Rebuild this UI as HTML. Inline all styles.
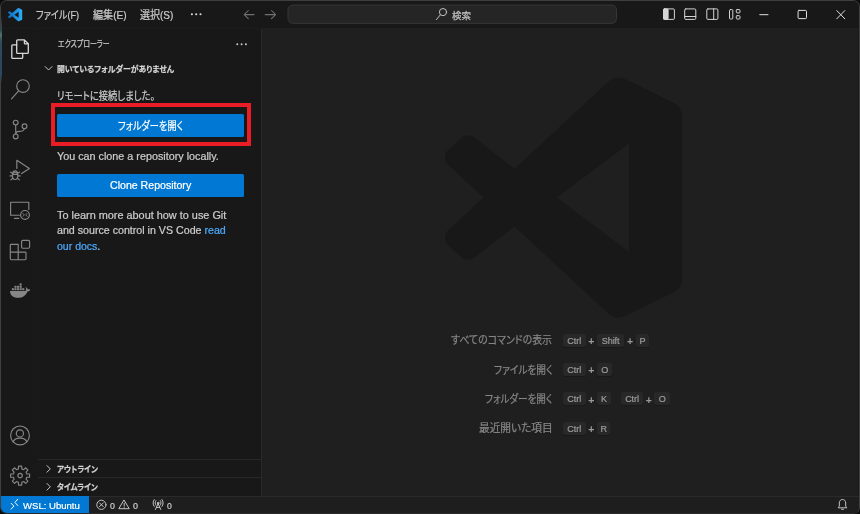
<!DOCTYPE html>
<html lang="ja">
<head>
<meta charset="utf-8">
<title>Visual Studio Code</title>
<style>
*{box-sizing:border-box;margin:0;padding:0}
html,body{width:860px;height:514px;overflow:hidden;background:#0c0c0c}
body{position:relative;font-family:"Liberation Sans","Noto Sans CJK JP",sans-serif;color:#ccc;font-size:10px;line-height:1}
.abs{position:absolute}
.t{position:absolute;white-space:nowrap;font-feature-settings:'palt';-webkit-text-stroke:0.22px;transform-origin:0 50%;line-height:14px;height:14px}
#deskL{left:0;top:16px;width:2px;height:68px;background:linear-gradient(rgba(58,63,70,0) 0,#3a4046 9px,#2e4a4e 14px,#4f7276 19px,#3c5a52 23px,#2d4a5e 26px,#2b4761 58px,rgba(52,60,68,0) 68px)}
#win{left:0;top:0;width:860px;height:514px;background:#181818;border:1px solid #3e3e3e;border-right-color:#404040;border-left-color:#404040;border-bottom-color:#2c2c2c;border-radius:7px;overflow:hidden}
#title{left:0;top:0;width:858px;height:28px;background:#181818;border-bottom:1px solid #1b1b1b}
#act{left:0;top:28px;width:37px;height:467px;background:#181818;border-right:1px solid #1a1a1a}
#side{left:37px;top:28px;width:224px;height:467px;background:#181818;border-right:1px solid #292929}
#editor{left:261px;top:27px;width:596px;height:468px;background:#1f1f1f}
#status{left:0;top:495px;width:858px;height:17px;background:#1e1e1e;border-top:1px solid #2a2a2a}
#remote{left:0;top:495px;width:88px;height:17px;background:#0078d4}
.btn{position:absolute;background:#0078d4;border-radius:1.5px}
.key{position:absolute;height:13px;background:#282828;border-radius:2px;box-shadow:0 1px 0 #191919;text-align:center;line-height:13px;white-space:nowrap;overflow:visible}
.kt{-webkit-text-stroke:0.2px;color:#9c9c9c;font-size:9.1px;letter-spacing:-0.1px}
.plus{position:absolute;width:8px;height:14px;line-height:14px;text-align:center;color:#9a9a9a;font-size:10.5px;font-weight:700}
.hl{position:absolute;height:1px;background:#272727}
svg{position:absolute;overflow:visible}
</style>
</head>
<body>
<div id="win" class="abs">
  <div id="title" class="abs"></div>
  <div id="act" class="abs"></div>
  <div id="side" class="abs"></div>
  <div id="editor" class="abs"></div>
  <div id="status" class="abs"></div>
  <div id="remote" class="abs"></div>
</div>
<div id="deskL" class="abs"></div>
<div id="ov" class="abs" style="left:0;top:0;width:860px;height:514px;will-change:transform">
<!-- search box -->
<svg style="left:0;top:0" width="860" height="30" viewBox="0 0 860 30"><rect x="288" y="5.05" width="328.5" height="18.35" rx="4.6" fill="#252525" stroke="#363636" stroke-width="1"/></svg>
<!-- buttons + red highlight -->
<div class="abs" style="left:50.5px;top:102.6px;width:200.2px;height:43.8px;border:4px solid #ea1c26"></div>
<div class="btn" style="left:57px;top:113.6px;width:187px;height:23.4px"></div>
<div class="btn" style="left:57px;top:174.2px;width:187px;height:22.6px"></div>
<!-- sidebar section separators -->
<div class="hl" style="left:38px;top:459px;width:223px"></div>
<div class="hl" style="left:38px;top:477px;width:223px"></div>
<!-- watermark logo -->
<svg style="left:444.8px;top:76.6px" width="237.2" height="241.2" viewBox="0 0 24 24" preserveAspectRatio="none"><path fill="#181818" d="M23.15 2.587L18.21.21a1.494 1.494 0 0 0-1.705.29l-9.46 8.63-4.12-3.128a.999.999 0 0 0-1.276.057L.327 7.261A1 1 0 0 0 .326 8.74L3.899 12 .326 15.26a1 1 0 0 0 .001 1.479L1.65 17.94a.999.999 0 0 0 1.276.057l4.12-3.128 9.46 8.63a1.492 1.492 0 0 0 1.704.29l4.942-2.377A1.5 1.5 0 0 0 24 20.06V3.939a1.5 1.5 0 0 0-.85-1.352zM18.62 17.4L11.3 12L18.62 6.62z"/></svg>
<!-- title logo -->
<svg style="left:7.6px;top:8px" width="14.2" height="13.4" viewBox="0 0 24 24" preserveAspectRatio="none"><defs><linearGradient id="lg" x1="0" x2="1" y1="0" y2="0"><stop offset="0" stop-color="#0b6fc2"/><stop offset="0.55" stop-color="#1b8fe0"/><stop offset="1" stop-color="#2fb0f7"/></linearGradient></defs><path fill="url(#lg)" d="M23.15 2.587L18.21.21a1.494 1.494 0 0 0-1.705.29l-9.46 8.63-4.12-3.128a.999.999 0 0 0-1.276.057L.327 7.261A1 1 0 0 0 .326 8.74L3.899 12 .326 15.26a1 1 0 0 0 .001 1.479L1.65 17.94a.999.999 0 0 0 1.276.057l4.12-3.128 9.46 8.63a1.492 1.492 0 0 0 1.704.29l4.942-2.377A1.5 1.5 0 0 0 24 20.06V3.939a1.5 1.5 0 0 0-.85-1.352zm-5.146 14.861L10.826 12l7.178-5.448v10.896z"/></svg>
<!-- icon layer -->
<svg style="left:0;top:0" width="860" height="514" viewBox="0 0 860 514" fill="none" stroke-linecap="round" stroke-linejoin="round">
<!-- title: ellipsis, arrows, search glyph, layout + window controls -->
<g fill="#dcdcdc"><circle cx="191.9" cy="14.3" r="1.05"/><circle cx="196.2" cy="14.3" r="1.05"/><circle cx="200.5" cy="14.3" r="1.05"/></g>
<g stroke="#6f6f6f" stroke-width="1.05"><path d="M254 14.6H244.2M248.3 10.5L244.2 14.6L248.3 18.7"/><path d="M265.2 14.6H275.6M271.5 10.5L275.6 14.6L271.5 18.7"/></g>
<g stroke="#c0c0c0" stroke-width="1"><circle cx="443" cy="12.1" r="3.6"/><path d="M440.3 14.9L436.4 19.6"/></g>
<g stroke="#d4d4d4" stroke-width="1">
<rect x="663.5" y="8.9" width="10.9" height="10.5" rx="1.1"/><rect x="663.5" y="8.9" width="4.6" height="10.5" rx="0.8" fill="#d4d4d4"/>
<rect x="684.7" y="8.9" width="11.1" height="10.5" rx="1.1"/><path d="M684.7 16.5H695.8"/>
<rect x="706.8" y="8.9" width="11.1" height="10.5" rx="1.1"/><path d="M713.7 8.9V19.4"/>
<rect x="729.5" y="9.6" width="3.3" height="9.4" rx="0.9"/><rect x="736.3" y="9.6" width="3.7" height="3.3" rx="0.8"/><rect x="736.3" y="15.7" width="3.7" height="3.3" rx="0.8"/>
</g>
<g stroke="#e0e0e0" stroke-width="1"><path d="M759.8 14.7H768"/><rect x="798.1" y="10.4" width="8.4" height="8.2" rx="0.9"/><path d="M836.8 10.6L844.8 18.8M844.8 10.6L836.8 18.8"/></g>
<!-- sidebar: ellipsis + chevrons -->
<g fill="#d0d0d0"><circle cx="237.3" cy="44.2" r="0.95"/><circle cx="241.6" cy="44.2" r="0.95"/><circle cx="245.9" cy="44.2" r="0.95"/></g>
<g stroke="#c8c8c8" stroke-width="1"><path d="M45.2 66.6L48.6 70L52 66.6"/><path d="M47 465.6L50.3 468.9L47 472.2"/><path d="M47 483.5L50.3 486.8L47 490.1"/></g>
<!-- activity bar -->
<g stroke="#d7d7d7" stroke-width="1.3"><path d="M24.4 39.9H17.6Q16.7 39.9 16.7 40.8V52.4Q16.7 53.3 17.6 53.3H27.4Q28.3 53.3 28.3 52.4V43.8L24.4 39.9V43.2Q24.4 43.8 25 43.8H28.3"/><path d="M16.7 44.9H12.7Q11.8 44.9 11.8 45.8V57.4Q11.8 58.3 12.7 58.3H21.8Q22.7 58.3 22.7 57.4V53.3"/></g>
<g stroke="#868686" stroke-width="1.15">
<circle cx="23" cy="86.1" r="6.3"/><path d="M18.6 90.8L11.5 98.8"/>
<circle cx="15.7" cy="122.6" r="2.4"/><circle cx="24.5" cy="126.3" r="2.4"/><circle cx="15.7" cy="136.4" r="2.4"/><path d="M15.7 125V134M24.3 128.8C23.6 131 21.5 131.4 19 131.4C17 131.4 15.9 132.4 15.7 134"/>
<path d="M16.8 168.4V160.3L29.4 168.4L21.6 173.6"/><ellipse cx="15.1" cy="175.8" rx="2.7" ry="3.7"/><path d="M12.4 174.3H17.8M12.9 172.6C13.2 170.2 17 170.2 17.3 172.6M12.4 175.9H10M12.6 173.6L10.6 172M12.8 178.2L10.8 179.9M17.8 175.9H20.2M17.6 173.6L19.6 172M17.4 178.2L19.4 179.9"/>
<path d="M19.4 215.2H10.6V202.2H28.8V209.4M14.4 218.3H18.8"/><circle cx="25" cy="214.9" r="4.4"/><path d="M22.9 213.4L24.3 214.9L22.9 216.4M27.1 213.4L25.7 214.9L27.1 216.4" stroke-width="0.9"/>
<path d="M18.2 244.4H11.2Q10.3 244.4 10.3 245.3V258.8Q10.3 259.7 11.2 259.7H25.1Q26 259.7 26 258.8V253Q26 252.1 25.1 252.1H18.2ZM18.2 252.1V259.7M10.3 252.1H18.2"/><rect x="21.6" y="240.4" width="8" height="7.9" rx="1.2"/>
<circle cx="20" cy="435.4" r="9.4"/><circle cx="19.9" cy="433.4" r="3.6"/><path d="M13.2 441.9C15 436.8 25 436.8 26.8 441.9"/>
<path d="M18.44 468.90 L18.52 466.13 L21.68 466.13 L21.76 468.90 L23.66 469.69 L25.68 467.79 L27.91 470.02 L26.01 472.04 L26.80 473.94 L29.57 474.02 L29.57 477.18 L26.80 477.26 L26.01 479.16 L27.91 481.18 L25.68 483.41 L23.66 481.51 L21.76 482.30 L21.68 485.07 L18.52 485.07 L18.44 482.30 L16.54 481.51 L14.52 483.41 L12.29 481.18 L14.19 479.16 L13.40 477.26 L10.63 477.18 L10.63 474.02 L13.40 473.94 L14.19 472.04 L12.29 470.02 L14.52 467.79 L16.54 469.69Z"/><circle cx="20.1" cy="475.6" r="2.2"/>
</g>
<g fill="#868686"><path d="M10 291H25.4C26.5 290 26.3 288.3 25.4 287.1C26.8 287.5 27.6 288.7 27.8 289.6C28.6 289.2 29.6 289.3 30.2 289.8C29.8 291 28.6 291.5 27.4 291.4C26 295.5 22.5 297.8 18 297.8C13 297.8 10 295 10 291Z"/><rect x="11.8" y="288.2" width="2.1" height="2"/><rect x="14.4" y="288.2" width="2.1" height="2"/><rect x="17" y="288.2" width="2.1" height="2"/><rect x="19.6" y="288.2" width="2.1" height="2"/><rect x="22.2" y="288.2" width="2.1" height="2"/><rect x="14.4" y="285.8" width="2.1" height="2"/><rect x="17" y="285.8" width="2.1" height="2"/><rect x="19.6" y="285.8" width="2.1" height="2"/><rect x="19.6" y="283.4" width="2.1" height="2"/></g>
<!-- status bar -->
<g stroke="#ffffff" stroke-width="1"><path d="M11.1 503.3L13.9 506.1L11.1 509.1"/><path d="M17.8 499.2L14.9 502.4L17.8 505.6"/></g>
<g stroke="#cccccc" stroke-width="0.95"><circle cx="101.4" cy="504.8" r="4.6"/><path d="M99.5 502.9L103.3 506.7M103.3 502.9L99.5 506.7"/>
<path d="M124.2 500.3L129.2 508.7H119.2Z"/><path d="M124.2 503.2V506M124.2 507.2V507.4"/>
<path d="M158.1 503.6L155.4 509.5M158.1 503.6L160.8 509.5M156.5 507.4H159.7"/><circle cx="158.1" cy="503" r="0.8"/><path d="M155.9 500.6C154.9 501.9 154.9 503.9 155.9 505.2M160.3 500.6C161.300 501.9 161.3 503.9 160.3 505.2M154.2 499.6C152.7 501.6 152.7 504.4 154.2 506.4M162 499.6C163.5 501.6 163.5 504.4 162 506.4"/>
<path d="M838.4 507.5L839.3 506.2V503C839.3 500.8 840.7 499.5 842.5 499.5C844.3 499.5 845.7 500.8 845.7 503V506.2L846.6 507.5ZM841.6 509.3H843.4"/></g>
</svg>

<span class="t" id="t0" style="left:35.8px;top:8.2px;font-size:10.9px;color:#cccccc;font-weight:400;transform:scaleX(0.8329);">ファイル(F)</span>
<span class="t" id="t1" style="left:92.5px;top:8.2px;font-size:10.9px;color:#cccccc;font-weight:400;transform:scaleX(0.9281);">編集(E)</span>
<span class="t" id="t2" style="left:140.0px;top:8.2px;font-size:10.9px;color:#cccccc;font-weight:400;transform:scaleX(0.9198);">選択(S)</span>
<span class="t" id="t3" style="left:452.2px;top:8.5px;font-size:9.6px;color:#c4c4c4;font-weight:400;transform:scaleX(0.9902);">検索</span>
<span class="t" id="t4" style="left:57.5px;top:36.8px;font-size:9.2px;color:#cccccc;font-weight:400;transform:scaleX(0.7546);">エクスプローラー</span>
<span class="t" id="t5" style="left:57.4px;top:61.6px;font-size:8.5px;color:#d4d4d4;font-weight:700;transform:scaleX(0.9253);">開いているフォルダーがありません</span>
<span class="t" id="t6" style="left:57.4px;top:89.0px;font-size:10.9px;color:#cccccc;font-weight:400;transform:scaleX(0.8536);">リモートに接続しました。</span>
<span class="t" id="t7" style="left:118.4px;top:119.0px;font-size:10.9px;color:#ffffff;font-weight:400;transform:scaleX(0.8452);">フォルダーを開く</span>
<span class="t" id="t8" style="left:57.2px;top:148.8px;font-size:10.7px;color:#cccccc;font-weight:400;transform:scaleX(1.0087);">You can clone a repository locally.</span>
<span class="t" id="t9" style="left:109.8px;top:178.0px;font-size:10.7px;color:#ffffff;font-weight:400;transform:scaleX(0.9904);">Clone Repository</span>
<span class="t" id="t10" style="left:57.2px;top:207.9px;font-size:10.7px;color:#cccccc;font-weight:400;transform:scaleX(1.0178);">To learn more about how to use Git</span>
<span class="t" id="t11" style="left:57.2px;top:223.1px;font-size:10.7px;color:#cccccc;font-weight:400;transform:scaleX(0.9968);">and source control in VS Code <span style="color:#4daafc">read</span></span>
<span class="t" id="t12" style="left:57.2px;top:238.5px;font-size:10.7px;color:#cccccc;font-weight:400;transform:scaleX(0.9844);"><span style="color:#4daafc">our docs</span>.</span>
<span class="t" id="t13" style="left:57.1px;top:462.2px;font-size:8.5px;color:#d4d4d4;font-weight:700;transform:scaleX(0.8843);">アウトライン</span>
<span class="t" id="t14" style="left:57.1px;top:480.1px;font-size:8.5px;color:#d4d4d4;font-weight:700;transform:scaleX(0.8943);">タイムライン</span>
<span class="t" id="t15" style="left:23.2px;top:498.8px;font-size:9.9px;color:#ffffff;font-weight:400;transform:scaleX(0.9671);">WSL: Ubuntu</span>
<span class="t" id="t16" style="left:110.3px;top:499.0px;font-size:9.7px;color:#cccccc;font-weight:400;transform:scaleX(0.9090);">0</span>
<span class="t" id="t17" style="left:132.8px;top:499.0px;font-size:9.7px;color:#cccccc;font-weight:400;transform:scaleX(0.9275);">0</span>
<span class="t" id="t18" style="left:166.5px;top:499.0px;font-size:9.7px;color:#cccccc;font-weight:400;transform:scaleX(0.8904);">0</span>
<span class="t" id="t19" style="left:451.2px;top:333.4px;font-size:10.9px;color:#868686;font-weight:400;transform:scaleX(0.9103);">すべてのコマンドの表示</span>
<span class="t" id="t20" style="left:493.6px;top:362.7px;font-size:10.9px;color:#868686;font-weight:400;transform:scaleX(0.8860);">ファイルを開く</span>
<span class="t" id="t21" style="left:484.7px;top:392.0px;font-size:10.9px;color:#868686;font-weight:400;transform:scaleX(0.8777);">フォルダーを開く</span>
<span class="t" id="t22" style="left:478.5px;top:421.3px;font-size:10.9px;color:#868686;font-weight:400;transform:scaleX(0.9810);">最近開いた項目</span>
<span class="key" style="left:562.8px;top:333.6px;width:22.9px"><span class="kt">Ctrl</span></span>
<span class="key" style="left:597.1px;top:333.6px;width:27.1px"><span class="kt">Shift</span></span>
<span class="key" style="left:562.8px;top:362.9px;width:22.9px"><span class="kt">Ctrl</span></span>
<span class="key" style="left:597.1px;top:362.9px;width:15.1px"><span class="kt">O</span></span>
<span class="key" style="left:562.8px;top:392.2px;width:22.9px"><span class="kt">Ctrl</span></span>
<span class="key" style="left:597.1px;top:392.2px;width:13.7px"><span class="kt">K</span></span>
<span class="key" style="left:562.8px;top:421.5px;width:22.9px"><span class="kt">Ctrl</span></span>
<span class="key" style="left:597.1px;top:421.5px;width:13.1px"><span class="kt">R</span></span>
<span class="key" style="left:636.2px;top:333.6px;width:12.6px"><span class="kt">P</span></span>
<span class="key" style="left:620.9px;top:392.2px;width:22.3px"><span class="kt">Ctrl</span></span>
<span class="key" style="left:654.3px;top:392.2px;width:16.0px"><span class="kt">O</span></span>
<span class="plus" style="left:587.3px;top:334.0px">+</span>
<span class="plus" style="left:587.3px;top:363.3px">+</span>
<span class="plus" style="left:587.3px;top:392.6px">+</span>
<span class="plus" style="left:587.3px;top:421.9px">+</span>
<span class="plus" style="left:626.0px;top:334.0px">+</span>
<span class="plus" style="left:644.8px;top:392.6px">+</span>
</div>
</body>
</html>
